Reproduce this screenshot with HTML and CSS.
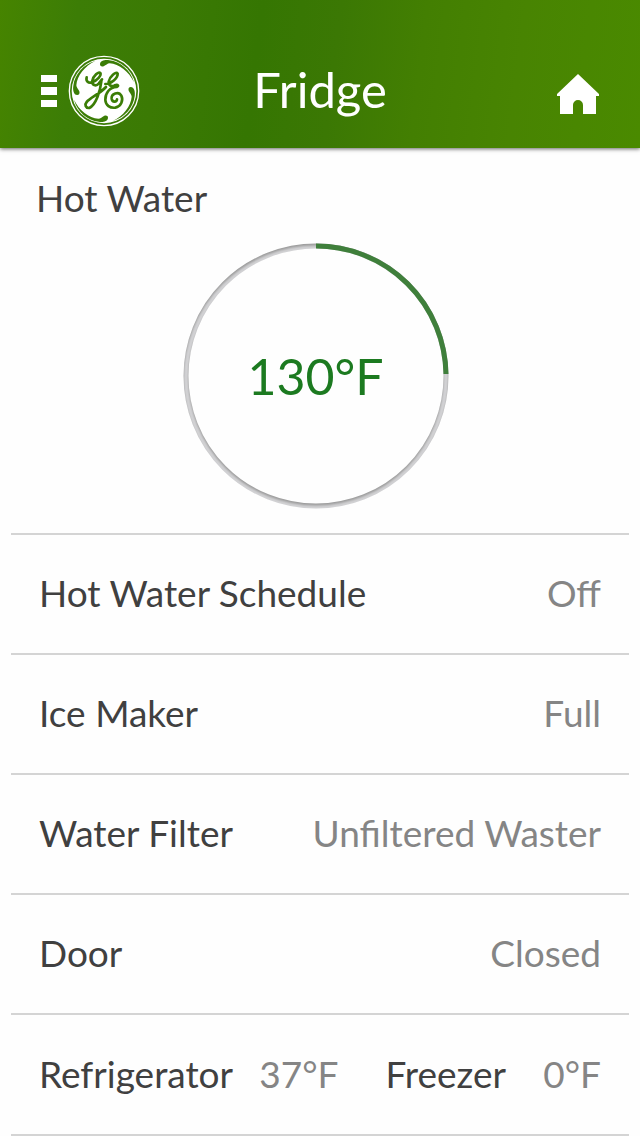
FILE: index.html
```html
<!DOCTYPE html>
<html lang="en">
<head>
<meta charset="utf-8">
<meta name="viewport" content="width=device-width, initial-scale=1">
<title>Fridge</title>
<link rel="stylesheet" href="styles.css">
</head>
<body>
<header class="topbar">
  <button class="menu" type="button" aria-label="Menu">
    <svg class="bars" viewBox="0 0 16 32" aria-hidden="true"><path d="M0 0h16v7H0zM0 12h16v8H0zM0 25h16v7H0z"/></svg>
    <svg class="logo" viewBox="115 30 216 216" aria-hidden="true">
      <circle class="logo-rim" cx="223" cy="138" r="104"/>
      <circle class="logo-disc" cx="223" cy="138" r="97"/>
      <g class="logo-leaf">
        <path id="leaf" d="M211 58C211 46 228 44 239 46C272 50 303 75 313 112C298 80 268 57 240 55C233 55 229 61 222 64C215 66 211 63 211 58Z"/>
        <use href="#leaf" transform="rotate(90 223 138)"/>
        <use href="#leaf" transform="rotate(180 223 138)"/>
        <use href="#leaf" transform="rotate(270 223 138)"/>
      </g>
      <g class="logo-script">
        <path d="M171 97C168 108 176 116 187 112C203 106 216 91 212 84C207 78 191 92 188 107C186 121 199 125 207 116L217 103M215 109C212 137 199 180 179 189C168 190 164 179 171 171C182 158 211 146 229 126"/>
        <path d="M227 117C244 117 265 99 264 86C259 78 240 94 237 110C236 121 245 126 255 121C265 117 269 123 261 126C240 126 226 145 227 165C228 181 241 190 257 188C274 185 282 166 275 152C267 137 244 146 246 161C248 173 261 172 262 163"/>
      </g>
    </svg>
  </button>
  <h1 class="title">Fridge</h1>
  <a class="home" href="#" aria-label="Home">
    <svg viewBox="0 0 42 40" aria-hidden="true"><path d="M21 0L42 20v2h-3v18H26V31a5 5 0 0 0-10 0v9H3V22H0v-2z"/></svg>
  </a>
</header>
<main>
  <section class="water">
    <h2 class="label">Hot Water</h2>
    <div class="dial">
      <svg viewBox="0 0 266 266" aria-hidden="true">
        <defs>
          <filter id="soft"><feGaussianBlur stdDeviation="1"/></filter>
          <mask id="ring"><circle cx="133" cy="133" r="130" fill="none" stroke="#fff" stroke-width="5"/></mask>
        </defs>
        <g mask="url(#ring)">
          <rect class="dial-shade" width="266" height="266"/>
          <circle class="dial-track" cx="133" cy="135" r="130" filter="url(#soft)"/>
        </g>
        <path class="dial-value" d="M133 3A130 130 0 0 1 263 131"/>
      </svg>
      <output class="reading">130°F</output>
    </div>
  </section>
  <dl class="list">
    <div class="row"><dt class="label">Hot Water Schedule</dt><dd class="value">Off</dd></div>
    <div class="row"><dt class="label">Ice Maker</dt><dd class="value">Full</dd></div>
    <div class="row"><dt class="label">Water Filter</dt><dd class="value">Unfiltered Waster</dd></div>
    <div class="row"><dt class="label">Door</dt><dd class="value">Closed</dd></div>
    <div class="row row-pair">
      <dt class="label">Refrigerator</dt><dd class="value">37°F</dd>
      <dt class="label">Freezer</dt><dd class="value">0°F</dd>
    </div>
  </dl>
</main>
</body>
</html>
```
FILE: styles.css
```css
* { box-sizing: border-box; }
body {
  margin: 0;
  background: #fefefe;
  color: #404040;
  font-family: Lato, "Open Sans", sans-serif;
  font-size: 37px;
  line-height: 44px;
}
h1, h2, dl, dd { margin: 0; font-weight: 400; }
svg { display: block; }
.topbar {
  display: grid;
  grid-template-columns: 1fr auto 1fr;
  align-items: center;
  padding: 54px 41px 20px;
  background: linear-gradient(97deg, #468400 0%, #3c7d06 12%, #3b7a04 25%, #357602 40%, #3b7804 52%, #437f02 65%, #488402 80%, #4a8a00 100%);
  box-shadow: 0 1px 4px rgba(0, 0, 0, .6);
}
.menu {
  display: flex;
  align-items: center;
  gap: 11px;
  padding: 0;
  border: 0;
  background: none;
}
.bars { width: 16px; height: 32px; fill: #fff; }
.logo { width: 72px; height: 72px; }
.logo-rim { fill: none; stroke: #fff; stroke-width: 4; }
.logo-disc { fill: #fff; }
.logo-leaf { fill: #3b7d06; }
.logo-script { fill: none; stroke: #3b7d06; stroke-width: 8; stroke-linecap: round; stroke-linejoin: round; }
.title { padding-bottom: 4px; color: #fff; font-size: 49px; line-height: 70px; }
.home { justify-self: end; padding-top: 6px; }
.home svg { width: 42px; height: 40px; fill: #fff; }
.label { color: #404040; }
.water { padding: 28px 45px 24px 36px; }
.water .label { font-size: 37px; }
.dial { display: grid; width: 266px; margin: 23px auto 0; place-items: center; }
.dial > * { grid-area: 1 / 1; }
.dial svg { width: 100%; }
.dial-shade { fill: #9a9a9a; }
.dial-track { fill: none; stroke: #d2d2d4; stroke-width: 5; }
.dial-value { fill: none; stroke: #3f7f3b; stroke-width: 5; }
.reading { color: #1c7a20; font-size: 50px; line-height: 64px; }
.list { padding: 0 11px; }
.row {
  display: flex;
  align-items: center;
  justify-content: space-between;
  min-height: 120px;
  padding: 0 28px 2px;
  border-top: 2px solid #d4d4d4;
}
.row:last-child { min-height: 123px; border-bottom: 2px solid #d4d4d4; }
.value { color: #858585; }
.row-pair { display: grid; grid-template-columns: 220fr 126fr 120fr 95fr; }
.row-pair .value:last-child { text-align: right; }
```
